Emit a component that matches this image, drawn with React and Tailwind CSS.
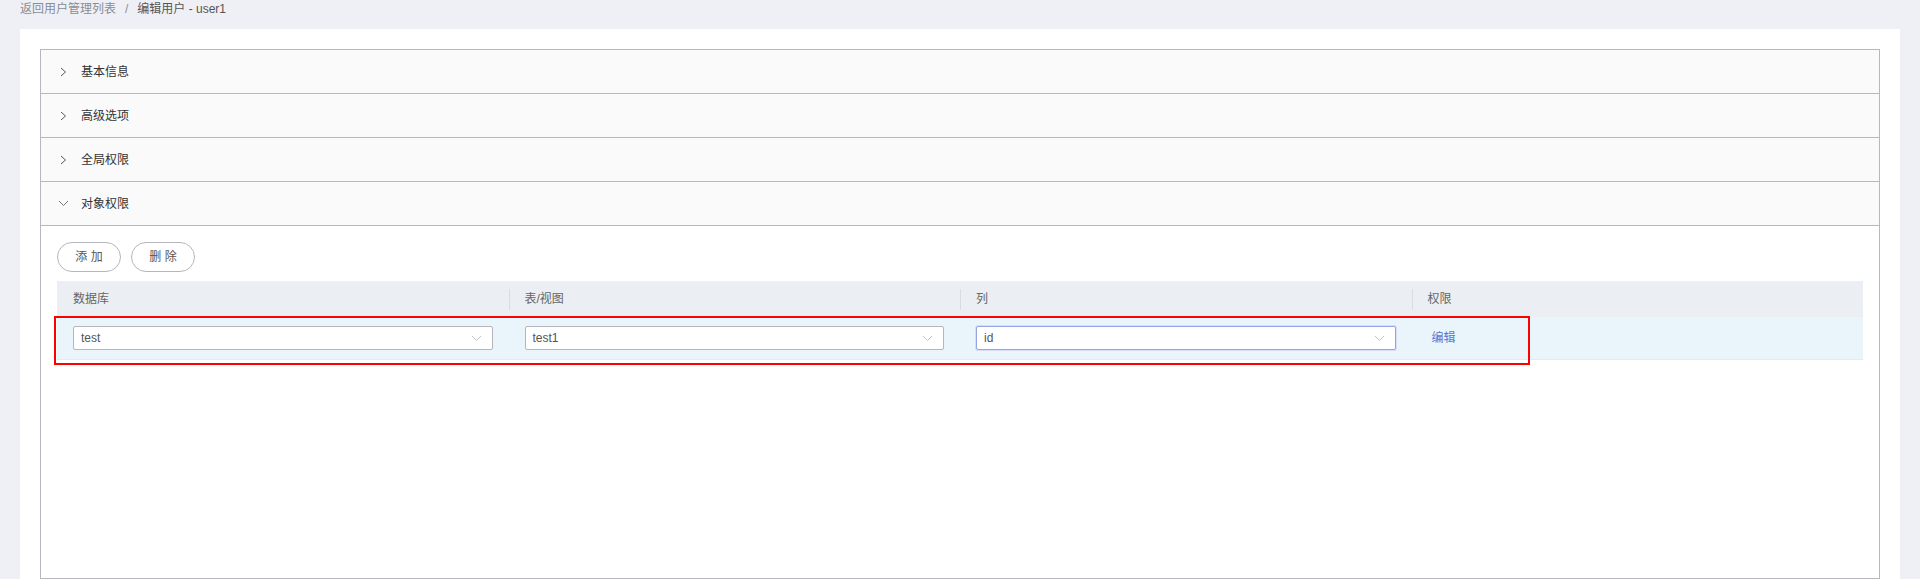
import React from "react";

const font = { fontFamily: '"Liberation Sans", "Noto Sans CJK SC", sans-serif' };

const sections = [
  { title: "基本信息", open: false },
  { title: "高级选项", open: false },
  { title: "全局权限", open: false },
  { title: "对象权限", open: true },
];

const columns = ["数据库", "表/视图", "列", "权限"];

const Chevron = ({ open }) =>
  open ? (
    <svg width="11" height="7" viewBox="0 0 11 7" className="ml-[-2px]">
      <path d="M1 1 L5.5 5.5 L10 1" fill="none" stroke="#666" strokeWidth="0.9" />
    </svg>
  ) : (
    <svg width="7" height="10" viewBox="0 0 7 10">
      <path d="M1 1 L5.5 5 L1 9" fill="none" stroke="#444" strokeWidth="0.9" />
    </svg>
  );

const SelectBox = ({ value, focused }) => (
  <div
    className={
      "flex items-center justify-between h-[24px] w-full rounded-[2px] bg-white pl-[7px] pr-[10px] text-[12px] text-[#555] " +
      (focused
        ? "border border-[#93a5e6] shadow-[0_0_0_1px_#d6def8]"
        : "border border-[#b5b6bd]")
    }
  >
    <span>{value}</span>
    <svg width="11" height="7" viewBox="0 0 11 7">
      <path d="M1 1 L5.5 5.5 L10 1" fill="none" stroke="#c2c4ca" strokeWidth="1" />
    </svg>
  </div>
);

const App = () => {
  return (
    <div className="h-[579px] overflow-hidden bg-[#eff0f5]" style={font}>
      {/* Breadcrumb */}
      <div className="h-[29px] pl-[20px] pt-[1px] text-[12px] leading-[16px]">
        <span className="text-[#8a8c93]">返回用户管理列表</span>
        <span className="mx-[9px] text-[#8a8c93]">/</span>
        <span className="text-[#555]">编辑用户 - user1</span>
      </div>

      {/* Card */}
      <div className="mx-[20px] bg-white px-[20px] pt-[20px]">
        <div className="border border-[#b7b8bf]">
          {sections.map((s) => (
            <div key={s.title}>
              <div className="flex h-[44px] items-center border-b border-[#b7b8bf] bg-[#fafafa] pl-[19px] text-[12px] text-[#333]">
                <span className="flex w-[21px] items-center">
                  <Chevron open={s.open} />
                </span>
                <span>{s.title}</span>
              </div>
              {s.open && (
                <div className="h-[352px] px-[16px] pt-[16px]">
                  {/* Buttons */}
                  <div className="flex gap-[10px]">
                    <button className="h-[30px] w-[64px] rounded-full border border-[#b5b6bd] bg-white text-[12px] text-[#555]">
                      添 加
                    </button>
                    <button className="h-[30px] w-[64px] rounded-full border border-[#b5b6bd] bg-white text-[12px] text-[#555]">
                      删 除
                    </button>
                  </div>

                  {/* Table */}
                  <div className="mt-[9px]">
                    <div className="grid h-[36px] grid-cols-4 bg-[#ebeef3] text-[12px] text-[#666]">
                      {columns.map((c, i) => (
                        <div key={c} className="flex items-center">
                          {i > 0 && <div className="h-[21px] w-px bg-[#d9dde3]" />}
                          <span className={i > 0 ? "pl-[15px]" : "pl-[16px]"}>{c}</span>
                        </div>
                      ))}
                    </div>
                    <div className="relative grid h-[43px] grid-cols-4 items-center border-b border-[#e4ebf0] bg-[#eaf5fb]">
                      <div className="px-[16px]">
                        <SelectBox value="test" />
                      </div>
                      <div className="px-[16px]">
                        <SelectBox value="test1" />
                      </div>
                      <div className="px-[16px]">
                        <SelectBox value="id" focused />
                      </div>
                      <div className="px-[20px] text-[12px] text-[#5876d0]">编辑</div>
                      {/* annotation box */}
                      <div className="pointer-events-none absolute left-[-3px] top-[-1px] h-[49px] w-[1476px] border-2 border-[#ff0000]" />
                    </div>
                  </div>
                </div>
              )}
            </div>
          ))}
        </div>
      </div>
    </div>
  );
};

export default App;
